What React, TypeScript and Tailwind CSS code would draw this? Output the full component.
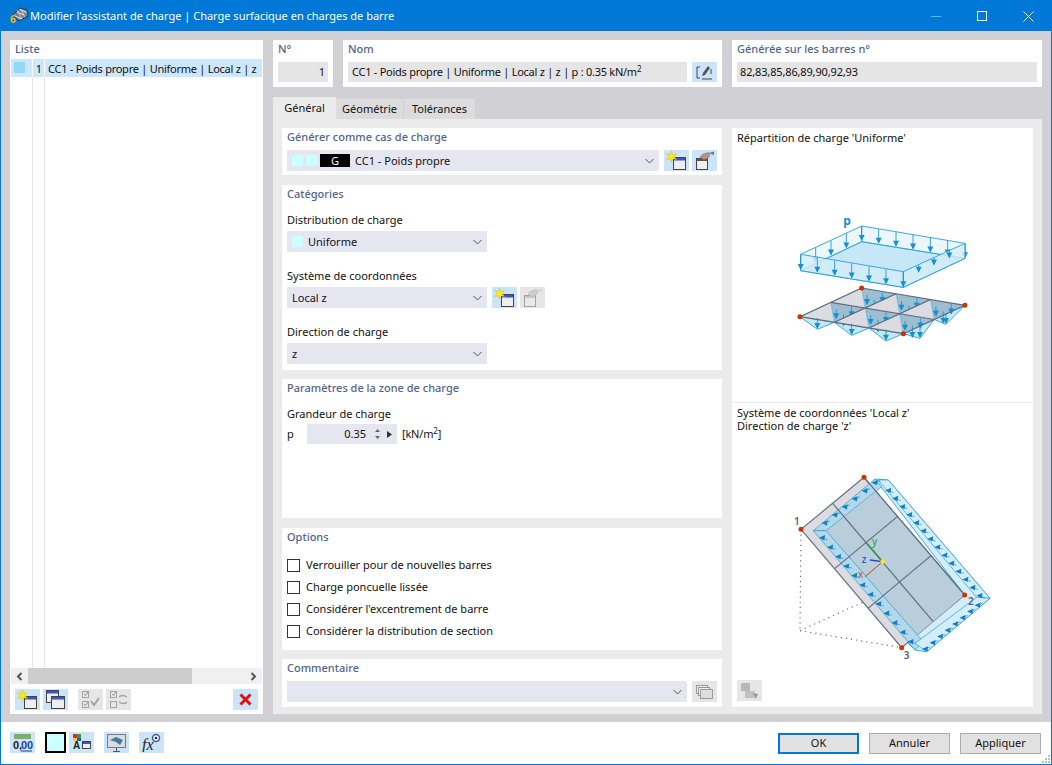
import React from "react";

const FONT = "font-['Noto_Sans','Open_Sans',sans-serif]";

function Chevron() {
  return (
    <svg width="9" height="6" viewBox="0 0 9 6" className="shrink-0">
      <path d="M.5 1l4 4 4-4" fill="none" stroke="#555" strokeWidth="1" />
    </svg>
  );
}

function NewWin() {
  return (
    <svg width="21" height="19" viewBox="0 0 21 19">
      <rect x="7.500" y="6.500" width="12" height="12" fill="#eee" stroke="#444" />
      <rect x="8" y="7" width="11" height="2.500" fill="#3d55c4" />
      <path d="M5.500 0l1.200 3.500 3.800-.8-2.400 2.900 2.400 2.900-3.800-.8L5.500 11 4.300 7.700l-3.800.8 2.400-2.900L.5 2.700l3.800.8z" fill="#f7ea1e" stroke="#c9b800" strokeWidth=".4" />
    </svg>
  );
}

function HandWin({ dim }: { dim?: boolean }) {
  return (
    <svg width="21" height="19" viewBox="0 0 21 19" opacity={dim ? 0.4 : 1}>
      <rect x="2.500" y="7.500" width="11" height="11" fill="#eee" stroke="#444" />
      <rect x="3" y="8" width="10" height="2" fill={dim ? "#999" : "#555"} />
      <path d="M6 6l3-3 5-1.500 2 1-.5 3-3 2.500-3 .5z" fill={dim ? "#aaa" : "#b8937f"} stroke="#777" strokeWidth=".5" />
      <path d="M15 2l5-1.500v3.500z" fill={dim ? "#bbb" : "#4a78c8"} />
    </svg>
  );
}

function TwoWin() {
  return (
    <svg width="19" height="19" viewBox="0 0 19 19">
      <rect x=".5" y=".5" width="12" height="12" fill="#eee" stroke="#444" />
      <rect x="1" y="1" width="11" height="2.500" fill="#3d55c4" />
      <rect x="5.500" y="6.500" width="13" height="12" fill="#eee" stroke="#444" />
      <rect x="6" y="7" width="12" height="2.500" fill="#3d55c4" />
    </svg>
  );
}

function CheckAll() {
  return (
    <svg width="19" height="19" viewBox="0 0 19 19" opacity=".6">
      <rect x="1.500" y="1.500" width="6" height="6" fill="none" stroke="#777" />
      <rect x="1.500" y="11.500" width="6" height="6" fill="none" stroke="#777" />
      <path d="M3 4l1.500 1.500L7 2M3 14l1.500 1.500L7 12" fill="none" stroke="#555" />
      <path d="M10 11l3 4 5-7" fill="none" stroke="#777" strokeWidth="2" />
    </svg>
  );
}

function CheckSwap() {
  return (
    <svg width="19" height="19" viewBox="0 0 19 19" opacity=".6">
      <rect x="1.500" y="1.500" width="6" height="6" fill="none" stroke="#777" />
      <rect x="1.500" y="11.500" width="6" height="6" fill="none" stroke="#777" />
      <path d="M3 4l1.500 1.500L7 2" fill="none" stroke="#555" />
      <path d="M10 7c2-2 5-2 8 0M10 12c3 2 6 2 8 0" fill="none" stroke="#777" strokeWidth="1.500" />
    </svg>
  );
}

function Btn({ children, off, x }: { children?: React.ReactNode; off?: boolean; x?: string }) {
  return (
    <div className={`w-[25px] h-[21px] shrink-0 flex items-center justify-center ${off ? "bg-[#e6e6e6]" : "bg-[#cce4f7]"} ${x ?? ""}`}>
      {children}
    </div>
  );
}

function Combo({ w, children }: { w: string; children: React.ReactNode }) {
  return (
    <div className={`${w} h-[21px] bg-[#e6e6f0] flex items-center pl-[5px] pr-[5px] shrink-0`}>
      <div className="flex-1 flex items-center min-w-0 h-[20px] leading-[20px]">{children}</div>
      <Chevron />
    </div>
  );
}

function Heading({ children, x }: { children: React.ReactNode; x?: string }) {
  return <div className={`h-[18px] leading-[18px] text-[#56638a] font-medium ${x ?? ""}`}>{children}</div>;
}

function Label({ children, x }: { children: React.ReactNode; x?: string }) {
  return <div className={`h-[16px] leading-[16px] text-[#111] ${x ?? ""}`}>{children}</div>;
}

function Check({ label }: { label: string }) {
  return (
    <div className="h-[22px] flex items-center gap-[6px]">
      <div className="w-[13px] h-[13px] border border-[#333] bg-white shrink-0" />
      <span className="text-[#111]">{label}</span>
    </div>
  );
}

const pt = (a: number[], b: number[], t: number) => [a[0] + (b[0] - a[0]) * t, a[1] + (b[1] - a[1]) * t];
const BLUE = "#1c9ad6";
const DARK = "#1590d0";

function Arrow({ x, y, len = 36 }: { x: number; y: number; len?: number }) {
  return (
    <g>
      <line x1={x} y1={y} x2={x} y2={y + len} stroke={DARK} strokeWidth="2.500" />
      <polygon points={`${x - 9},${y + len - 15} ${x + 9},${y + len - 15} ${x},${y + len + 3}`} fill={DARK} />
    </g>
  );
}

function LoadFigure() {
  const L = [210, 380], B = [395, 294], R = [705, 346], F = [520, 431];
  const P = (i: number, j: number) => {
    const a = pt(L, F, i / 3);
    const b = pt(B, R, i / 3);
    return pt(a, b, j / 2);
  };
  const lines: React.ReactNode[] = [];
  const tops: React.ReactNode[] = [];
  for (let i = 0; i < 3; i++) {
    for (let j = 0; j < 2; j++) {
      const p = [P(i, j), P(i + 1, j), P(i + 1, j + 1), P(i, j + 1)];
      const s = (a: number[][]) => a.map((q) => q.join(",")).join(" ");
      const c = [(p[1][0] + p[2][0] + p[3][0]) / 3, (p[1][1] + p[2][1] + p[3][1]) / 3];
      tops.push(
        <g key={`c${i}${j}`}>
          <polygon points={s([p[1], p[2], p[3]])} fill="#9dbdd1" />
          <polygon points={s([p[0], p[1], p[3]])} fill="#dcdbe0" />
          <line x1={p[0][0]} y1={p[0][1]} x2={p[3][0]} y2={p[3][1]} stroke={BLUE} strokeWidth="1.500" />
          <line x1={p[1][0]} y1={p[1][1]} x2={p[3][0]} y2={p[3][1]} stroke={BLUE} strokeWidth="1.500" />
          <Arrow x={c[0] - 22} y={c[1] - 4} len={26} />
          <Arrow x={c[0] + 24} y={c[1] - 12} len={28} />
          <Arrow x={c[0]} y={c[1] + 10} len={34} />
        </g>
      );
    }
  }
  const hang: number[][][] = [
    [L, [262, 418], P(1, 0)],
    [P(1, 0), [365, 436], P(2, 0)],
    [P(2, 0), [468, 453], F],
    [F, [570, 445], P(3, 1)],
    [P(3, 1), [648, 403], R],
  ];
  for (let i = 0; i <= 3; i++) lines.push(<line key={`u${i}`} x1={P(i, 0)[0]} y1={P(i, 0)[1]} x2={P(i, 2)[0]} y2={P(i, 2)[1]} stroke="#5f6b80" strokeWidth="3.500" />);
  for (let j = 0; j <= 2; j++) lines.push(<line key={`v${j}`} x1={P(0, j)[0]} y1={P(0, j)[1]} x2={P(3, j)[0]} y2={P(3, j)[1]} stroke="#5f6b80" strokeWidth="3.500" />);
  const frontArrows = [212, 262, 314, 365, 417, 468, 520];
  const backArrows = [395, 446, 498, 549, 601, 653, 705];
  const sideArrows = [257, 303, 349];
  const rightArrows = [566, 612, 658];
  return (
    <svg width="298" height="170" viewBox="6 0 894 510" className="block">
      <polygon points="212,242 395,155 705,205 520,292" fill="#c6e7f6" stroke={BLUE} strokeWidth="2.500" />
      <polygon points="212,193 395,108 395,155 212,242" fill="#e4f4fb" fillOpacity=".7" stroke={BLUE} strokeWidth="2.500" />
      <polygon points="395,108 705,160 705,205 395,155" fill="#e4f4fb" fillOpacity=".7" stroke={BLUE} strokeWidth="2.500" />
      {backArrows.map((x) => <Arrow key={x} x={x} y={108 + (x - 395) * 0.168} len={42} />)}
      {sideArrows.map((x) => <Arrow key={x} x={x} y={173 - (x - 257) * 0.465} len={42} />)}
      <polygon points="212,193 520,245 520,292 212,242" fill="#d4edf8" fillOpacity=".8" stroke={BLUE} strokeWidth="2.500" />
      <polygon points="520,245 705,160 705,205 520,292" fill="#d4edf8" fillOpacity=".8" stroke={BLUE} strokeWidth="2.500" />
      {frontArrows.map((x) => <Arrow key={x} x={x} y={195 + (x - 212) * 0.168} len={42} />)}
      {rightArrows.map((x) => <Arrow key={x} x={x} y={225 - (x - 566) * 0.465} len={20} />)}
      <text x="340" y="105" fill={DARK} fontSize="36" fontWeight="700">p</text>
      {hang.map((h, i) => (
        <polygon key={i} points={h.map((q) => q.join(",")).join(" ")} fill="#c6e7f6" stroke={BLUE} strokeWidth="2.500" />
      ))}
      {tops}
      {hang.map((h, i) => <Arrow key={i} x={h[1][0]} y={h[1][1] - 34} len={30} />)}
      {lines}
      {[L, B, R, F].map((q, i) => <circle key={i} cx={q[0]} cy={q[1]} r="7.500" fill="#cc3300" />)}
    </svg>
  );
}

function BandArrows({ a, b, n, dx = -22, dy = -10 }: { a: number[]; b: number[]; n: number; dx?: number; dy?: number }) {
  const out: React.ReactNode[] = [];
  for (let i = 0; i < n; i++) {
    const p = pt(a, b, (i + 0.5) / n);
    out.push(
      <g key={i}>
        <line x1={p[0]} y1={p[1]} x2={p[0] + dx} y2={p[1] + dy} stroke={DARK} strokeWidth="2" />
        <polygon points={`${p[0] + dx - 3},${p[1] + dy} ${p[0] + dx + 15},${p[1] + dy - 8} ${p[0] + dx + 13},${p[1] + dy + 8}`} fill="#0f80c4" />
      </g>
    );
  }
  return <>{out}</>;
}

function CoordFigure() {
  const A = [123, 208], T = [312, 52], C = [614, 405], D = [425, 563];
  const dots = [
    [A, [120, 512]], [[120, 512], D], [[120, 512], [312, 425]], [T, [312, 425]], [[312, 425], [600, 480]],
  ];
  return (
    <svg width="260" height="210" viewBox="0 0 780 630" className="block">
      {dots.map((d, i) => (
        <line key={i} x1={d[0][0]} y1={d[0][1]} x2={d[1][0]} y2={d[1][1]} stroke="#667" strokeWidth="3.500" strokeDasharray="3.500 12" />
      ))}
      <polygon points="345,57 385,60 690,415 500,575 465,570 440,545 614,405" fill="#d4edfa" stroke={BLUE} strokeWidth="2.500" />
      <polygon points={`${A} ${T} ${C} ${D}`} fill="#dcdbe0" stroke="#5f6b80" strokeWidth="3.500" />
      <polygon points="198,212 350,95 614,405 465,530" fill="#b9cddb" />
      <polygon points="160,212 345,57 365,80 198,212" fill="#b4d8ea" stroke={BLUE} strokeWidth="2" />
      <polygon points="160,212 465,570 490,545 198,212" fill="#b4d8ea" stroke={BLUE} strokeWidth="2" />
      <polygon points="355,60 385,60 690,415 650,412" fill="#d4edfa" stroke={BLUE} strokeWidth="2" />
      <polygon points="650,412 690,415 500,575 465,550" fill="#d4edfa" stroke={BLUE} strokeWidth="2" />
      <BandArrows a={[195, 195]} b={[375, 50]} n={6} dx={-22} dy={6} />
      <BandArrows a={[190, 225]} b={[480, 565]} n={12} dx={-22} dy={-6} />
      <BandArrows a={[390, 85]} b={[685, 425]} n={14} dx={-22} dy={-6} />
      <BandArrows a={[680, 420]} b={[500, 570]} n={8} dx={-22} dy={6} />
      <line x1={T[0]} y1={T[1]} x2={C[0]} y2={C[1]} stroke="#5f6b80" strokeWidth="3.500" />
      <line x1="218" y1="130" x2="519" y2="484" stroke="#5f6b80" strokeWidth="3.500" />
      <line x1="412" y1="170" x2="224" y2="326" stroke="#5f6b80" strokeWidth="3.500" />
      <line x1="513" y1="287" x2="324" y2="445" stroke="#5f6b80" strokeWidth="3.500" />
      <line x1="368" y1="305" x2="322" y2="252" stroke="#1f9a46" strokeWidth="4" />
      <line x1="368" y1="305" x2="330" y2="300" stroke="#2244cc" strokeWidth="4" />
      <line x1="368" y1="305" x2="315" y2="350" stroke="#cc4411" strokeWidth="3" />
      <circle cx="368" cy="305" r="7" fill="#f5e625" />
      <text x="336" y="255" fill="#1f9a46" fontSize="30">y</text>
      <text x="305" y="310" fill="#2244cc" fontSize="30">z</text>
      <text x="294" y="353" fill="#cc4411" fontSize="30">x</text>
      <text x="102" y="196" fill="#5a5f70" fontSize="30" fontWeight="600">1</text>
      <text x="624" y="436" fill="#5a5f70" fontSize="30" fontWeight="600">2</text>
      <text x="431" y="598" fill="#5a5f70" fontSize="30" fontWeight="600">3</text>
      {[A, T, C, D].map((q, i) => <circle key={i} cx={q[0]} cy={q[1]} r="7.500" fill="#cc3300" />)}
    </svg>
  );
}

function TitleIcon() {
  return (
    <svg width="20" height="22" viewBox="0 0 20 22" className="shrink-0">
      <path d="M4 10L11 3l7 2 1 6-9 5z" fill="#77818f" stroke="#2a2a2a" strokeWidth=".8" />
      <path d="M8 7l7 3M10.500 4.500l7 3M6 11l7 3" stroke="#eee" strokeWidth="1" />
      <path d="M8 5l5 9M12 4l4 8" stroke="#ddd" strokeWidth=".7" />
      <text x="1" y="18" fontSize="10" fontWeight="700" fill="#f2b600">6</text>
    </svg>
  );
}

export default function App() {
  return (
    <div className={`w-[1052px] h-[765px] flex flex-col border border-[#0078d7] bg-white text-[11px] overflow-hidden ${FONT}`}>
      {/* title */}
      <div className="h-[30px] shrink-0 bg-[#0078d7] flex items-center pl-[8px] text-white">
        <TitleIcon />
        <span className="ml-px">Modifier l'assistant de charge | Charge surfacique en charges de barre</span>
        <div className="ml-auto flex h-full items-center">
          <div className="w-[46px] flex justify-center"><div className="w-[10px] h-px bg-[#66aee7]" /></div>
          <div className="w-[46px] flex justify-center"><div className="w-[10px] h-[10px] border border-white" /></div>
          <div className="w-[46px] flex justify-center">
            <svg width="11" height="11" viewBox="0 0 11 11"><path d="M.5.5l10 10M10.500.5l-10 10" stroke="#fff" /></svg>
          </div>
        </div>
      </div>

      {/* body */}
      <div className="h-[691px] shrink-0 bg-[#d1d0d5] flex pl-[9px] pr-[9px] pt-[9px] pb-[8px]">
        {/* left */}
        <div className="w-[253px] shrink-0 bg-white flex flex-col px-px">
          <Heading x="pl-[4px] !h-[19px]">Liste</Heading>
          <div className="h-[18px] bg-[#cce8ff] flex items-stretch shrink-0 text-[#111] leading-[19px]">
            <div className="w-[21px] pl-[3px] pt-[3px]"><div className="w-[11px] h-[11px] bg-[#92d8f7]" /></div>
            <div className="w-[12px] border-l border-white text-right pr-[2px]">1</div>
            <div className="flex-1 border-l border-white pl-[3px] whitespace-nowrap tracking-[-0.26px]">CC1 - Poids propre | Uniforme | Local z | z</div>
          </div>
          <div className="flex-1 flex">
            <div className="w-[21px]" />
            <div className="w-[12px] border-l border-[#e5e5e5]" />
            <div className="flex-1 border-l border-[#e5e5e5]" />
          </div>
          <div className="h-[16px] bg-[#f0f0f0] flex items-center shrink-0">
            <div className="w-[17px] flex justify-center">
              <svg width="7" height="9" viewBox="0 0 7 9"><path d="M5.500 1L2 4.500 5.500 8" fill="none" stroke="#555" strokeWidth="2" /></svg>
            </div>
            <div className="w-[164px] h-full bg-[#cdcdcd]" />
            <div className="flex-1 flex justify-end pr-[5px]">
              <svg width="7" height="9" viewBox="0 0 7 9"><path d="M1.500 1L5 4.500 1.500 8" fill="none" stroke="#555" strokeWidth="2" /></svg>
            </div>
          </div>
          <div className="h-[30px] shrink-0 flex items-start pt-[5px] pl-[4px]">
            <Btn><NewWin /></Btn>
            <Btn x="ml-[3px]"><TwoWin /></Btn>
            <Btn off x="ml-[10px]"><CheckAll /></Btn>
            <Btn off x="ml-[3px]"><CheckSwap /></Btn>
            <Btn x="ml-[102px]">
              <svg width="13" height="13" viewBox="0 0 13 13"><path d="M1.500 1.500l10 10M11.500 1.500l-10 10" stroke="#e01010" strokeWidth="3" /></svg>
            </Btn>
          </div>
        </div>

        {/* right */}
        <div className="w-[769px] ml-[10px] shrink-0 flex flex-col">
          <div className="h-[47px] flex shrink-0">
            <div className="w-[60px] bg-white px-[5px]">
              <Heading x="!h-[22px] !leading-[18px]">N°</Heading>
              <div className="h-[20px] bg-[#e5e5e5] flex items-center justify-end pr-[3px] pt-px text-[#111]">1</div>
            </div>
            <div className="w-[379px] ml-[10px] bg-white px-[5px]">
              <Heading x="!h-[22px] !leading-[18px]">Nom</Heading>
              <div className="flex">
                <div className="w-[339px] h-[20px] bg-[#e5e5e5] flex items-center pl-[4px] pt-px text-[#111] whitespace-nowrap overflow-hidden tracking-[-0.26px]">
                  <span>CC1 - Poids propre | Uniforme | Local z | z | p : 0.35 kN/m<sup className="text-[8px] leading-none">2</sup></span>
                </div>
                <Btn x="ml-[5px] !h-[20px]">
                  <svg width="17" height="15" viewBox="0 0 17 15">
                    <path d="M4 2H1v11h3M6 14h10M15 4v5" fill="none" stroke="#445" />
                    <path d="M6 11l1-3 5-7 2 2-5 7z" fill="#555" />
                  </svg>
                </Btn>
              </div>
            </div>
            <div className="w-[310px] ml-[10px] bg-white px-[5px]">
              <Heading x="!h-[22px] !leading-[18px]">Générée sur les barres n°</Heading>
              <div className="h-[20px] bg-[#e5e5e5] flex items-center pl-[3px] pt-px text-[#111] tracking-[-0.15px]">82,83,85,86,89,90,92,93</div>
            </div>
          </div>

          {/* tabs */}
          <div className="h-[22px] mt-[10px] flex shrink-0 text-[#111]">
            <div className="w-[63px] bg-[#ebebeb] flex items-center justify-center pt-px">Général</div>
            <div className="w-[67px] mt-[2px] h-[20px] bg-[#dcdcdc] flex items-center justify-center pt-px">Géométrie</div>
            <div className="w-[72px] mt-[2px] h-[20px] bg-[#dcdcdc] flex items-center justify-center pt-px border-l border-[#d1d0d5]">Tolérances</div>
          </div>

          {/* tab panel */}
          <div className="flex-1 bg-[#ebebeb] flex pt-[9px] pl-[9px] pr-[9px] pb-[7px]">
            <div className="w-[440px] shrink-0 flex flex-col">
              <div className="h-[47px] bg-white pl-[5px] shrink-0">
                <Heading x="!h-[22px]">Générer comme cas de charge</Heading>
                <div className="flex">
                  <Combo w="w-[372px]">
                    <div className="w-[11px] h-[11px] bg-[#ccffff]" />
                    <div className="w-[11px] h-[11px] bg-[#ccffff] ml-[3px]" />
                    <div className="w-[30px] h-[13px] bg-black text-white text-center leading-[13px] ml-[3px]">G</div>
                    <span className="ml-[5px] text-[#111]">CC1 - Poids propre</span>
                  </Combo>
                  <Btn x="ml-[5px]"><NewWin /></Btn>
                  <Btn x="ml-[3px]"><HandWin /></Btn>
                </div>
              </div>

              <div className="h-[185px] mt-[10px] bg-white pl-[5px] shrink-0">
                <Heading x="!h-[26px]">Catégories</Heading>
                <Label x="mt-px">Distribution de charge</Label>
                <div className="mt-[3px]">
                  <Combo w="w-[200px]">
                    <div className="w-[11px] h-[11px] bg-[#ccffff]" />
                    <span className="ml-[5px] text-[#111]">Uniforme</span>
                  </Combo>
                </div>
                <Label x="mt-[16px]">Système de coordonnées</Label>
                <div className="mt-[3px] flex">
                  <Combo w="w-[200px]"><span className="text-[#111]">Local z</span></Combo>
                  <Btn x="ml-[5px]"><NewWin /></Btn>
                  <Btn off x="ml-[3px]"><HandWin dim /></Btn>
                </div>
                <Label x="mt-[16px]">Direction de charge</Label>
                <div className="mt-[3px]">
                  <Combo w="w-[200px]"><span className="text-[#111]">z</span></Combo>
                </div>
              </div>

              <div className="h-[139px] mt-[9px] bg-white pl-[5px] shrink-0">
                <Heading x="!h-[26px]">Paramètres de la zone de charge</Heading>
                <Label x="mt-px">Grandeur de charge</Label>
                <div className="flex items-center mt-[2px] h-[20px] text-[#111]">
                  <span className="w-[20px]">p</span>
                  <div className="w-[90px] h-[20px] bg-[#e6e6f0] flex items-center">
                    <span className="w-[59px] text-right">0.35</span>
                    <svg width="7" height="12" viewBox="0 0 7 12" className="ml-[8px]"><path d="M3.500 1L6 4H1zM3.500 11L1 8h5z" fill="#666" /></svg>
                    <svg width="5" height="7" viewBox="0 0 5 7" className="ml-[6px]"><path d="M0 0l5 3.500L0 7z" fill="#333" /></svg>
                  </div>
                  <span className="ml-[5px] tracking-[-0.2px]">[kN/m<sup className="text-[8px] leading-none">2</sup>]</span>
                </div>
              </div>

              <div className="h-[122px] mt-[10px] bg-white pl-[5px] shrink-0">
                <Heading x="!h-[26px]">Options</Heading>
                <Check label="Verrouiller pour de nouvelles barres" />
                <Check label="Charge poncuelle lissée" />
                <Check label="Considérer l'excentrement de barre" />
                <Check label="Considérer la distribution de section" />
              </div>

              <div className="h-[48px] mt-[9px] bg-white pl-[5px] shrink-0">
                <Heading x="!h-[22px]">Commentaire</Heading>
                <div className="flex">
                  <Combo w="w-[400px]"><span /></Combo>
                  <Btn off x="ml-[5px]">
                    <svg width="17" height="14" viewBox="0 0 17 14">
                      <rect x=".5" y=".5" width="11" height="8" fill="#eee" stroke="#999" />
                      <rect x="2.500" y="2.500" width="11" height="8" fill="#eee" stroke="#999" />
                      <rect x="4.500" y="4.500" width="12" height="9" fill="#ddd" stroke="#999" />
                    </svg>
                  </Btn>
                </div>
              </div>
            </div>

            <div className="w-[301px] ml-[10px] shrink-0 flex flex-col text-[#111]">
              <div className="h-[274px] bg-white shrink-0">
                <div className="pl-[5px] pt-[2px] h-[62px] leading-[16px]">Répartition de charge 'Uniforme'</div>
                <LoadFigure />
              </div>
              <div className="flex-1 mt-px bg-white flex flex-col">
                <div className="pl-[5px] pt-[3px] h-[57px]">
                  <div className="h-[13px] leading-[13px]">Système de coordonnées 'Local z'</div>
                  <div className="h-[13px] leading-[13px]">Direction de charge 'z'</div>
                </div>
                <div className="pl-[28px]"><CoordFigure /></div>
                <div className="mt-[10px] pl-[5px]">
                  <Btn off>
                    <svg width="20" height="18" viewBox="0 0 20 18" opacity=".6">
                      <rect x="1" y="1" width="9" height="8" fill="#999" />
                      <rect x="5" y="9" width="10" height="7" fill="#aaa" />
                      <path d="M13 11l5 1-2 5z" fill="#666" />
                    </svg>
                  </Btn>
                </div>
              </div>
            </div>
          </div>
        </div>
      </div>

      {/* footer */}
      <div className="flex-1 flex items-start pl-[9px] pt-[10px] relative">
        <Btn>
          <svg width="21" height="18" viewBox="0 0 21 18">
            <rect x="2" y="0" width="17" height="5" fill="#7fae6a" />
            <text x="1" y="15" fontSize="11" fontWeight="700" fill="#222" fontFamily="Liberation Sans">0,</text>
            <text x="9" y="15" fontSize="11" fontWeight="700" fill="#1a3fa8" fontFamily="Liberation Sans">00</text>
            <path d="M9 17h11" stroke="#1a3fa8" />
          </svg>
        </Btn>
        <div className="w-[21px] h-[21px] ml-[10px] border-2 border-black bg-[#ccffff]" />
        <div className="w-[25px] h-[21px] ml-[3px] bg-[#cce4f7] flex items-center justify-center">
          <svg width="21" height="18" viewBox="0 0 21 18">
            <rect x="2" y="0" width="4" height="4" fill="#d03030" />
            <rect x="6" y="0" width="4" height="4" fill="#30a030" />
            <rect x="2" y="4" width="4" height="3" fill="#f0d020" />
            <rect x="6" y="4" width="4" height="3" fill="#3050d0" />
            <text x="2" y="15" fontSize="10" fontWeight="700" fill="#222" fontFamily="Liberation Sans">A</text>
            <rect x="11.500" y="7.500" width="8" height="7" fill="#eee" stroke="#444" />
            <rect x="12" y="8" width="7" height="2" fill="#3d55c4" />
          </svg>
        </div>
        <Btn x="ml-[10px]">
          <svg width="19" height="18" viewBox="0 0 19 18">
            <rect x=".5" y=".5" width="18" height="13" fill="#d8dde3" stroke="#778" />
            <path d="M3 6l6-3 7 3-3 5-4-3z" fill="#4a7a9a" />
            <path d="M9.500 14v3M6 17.500h7" stroke="#556" />
          </svg>
        </Btn>
        <Btn x="ml-[10px]">
          <svg width="20" height="19" viewBox="0 0 20 19">
            <text x="0" y="17" fontSize="16" fontStyle="italic" fontFamily="Liberation Serif" fill="#222">fx</text>
            <circle cx="14" cy="5" r="3.500" fill="#fff" stroke="#3a5a9a" strokeWidth="1.500" />
            <circle cx="14" cy="5" r="1.300" fill="#223" />
          </svg>
        </Btn>
        <div className="ml-auto flex gap-[10px] pr-[10px] pt-px text-[#111]">
          <div className="w-[81px] h-[21px] bg-[#e1e1e1] border-2 border-[#0078d7] flex items-center justify-center">OK</div>
          <div className="w-[81px] h-[21px] bg-[#e1e1e1] border border-[#adadad] flex items-center justify-center">Annuler</div>
          <div className="w-[81px] h-[21px] bg-[#e1e1e1] border border-[#adadad] flex items-center justify-center">Appliquer</div>
        </div>
        <svg width="10" height="10" viewBox="0 0 10 10" className="absolute right-0 bottom-0">
          <path d="M7 1h2v2H7zM4 4h2v2H4zM7 4h2v2H7zM1 7h2v2H1zM4 7h2v2H4zM7 7h2v2H7z" fill="#bbb" />
        </svg>
      </div>
    </div>
  );
}
